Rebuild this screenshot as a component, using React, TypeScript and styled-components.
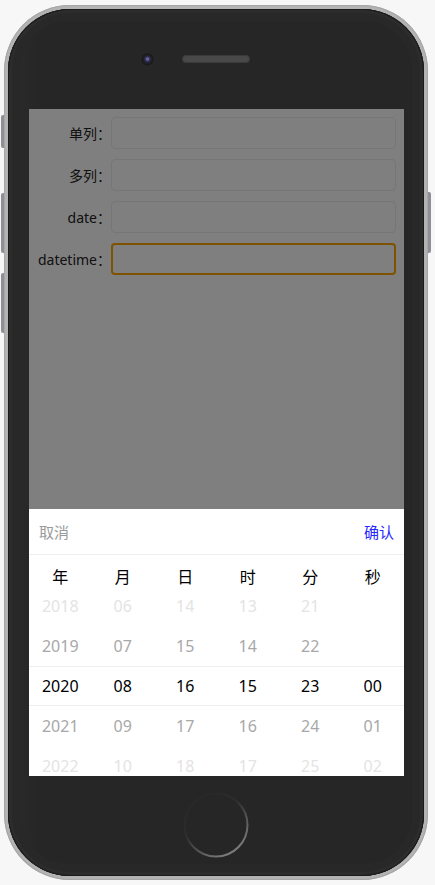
import React from "react";
import styled, { createGlobalStyle } from "styled-components";

const Global = createGlobalStyle`
  html, body { margin: 0; padding: 0; background: #f7f7f7; }
  body { font-family: "Noto Sans", "Noto Sans CJK SC", sans-serif; }
  #root { width: 435px; height: 885px; overflow: hidden; }
`;

const Phone = styled.div`
  position: relative;
  box-sizing: border-box;
  margin: 5px 0 0 4px;
  width: 424px;
  height: 875px;
  padding: 4px;
  border-radius: 66px;
  background: #b3b3b3;
  box-shadow: inset 0 0 0 1px #a6a6a6;
`;

const SideButton = styled.div<{ $side: "left" | "right"; $top: number; $h: number }>`
  position: absolute;
  top: ${(p) => p.$top}px;
  ${(p) => (p.$side === "left" ? "left: -3px;" : "right: -3px;")}
  width: 3px;
  height: ${(p) => p.$h}px;
  background: #8f8f96;
  border-radius: ${(p) => (p.$side === "left" ? "2px 0 0 2px" : "0 2px 2px 0")};
`;

const Body = styled.div`
  box-sizing: border-box;
  height: 100%;
  border-radius: 62px;
  background: linear-gradient(90deg, #2c2c2c 0, #262626 30px, #262626 100%);
  box-shadow: inset 0 0 0 1px #1b1b1b, inset 0 0 0 4px #2c2c2c, inset 0 0 0 12px #282828;
  display: flex;
  flex-direction: column;
`;

const TopBezel = styled.div`
  height: 100px;
  display: grid;
  grid-template-columns: 1fr auto 1fr;
  align-items: center;
`;

const Camera = styled.div`
  justify-self: end;
  margin-right: 31px;
  width: 9px;
  height: 9px;
  border-radius: 50%;
  background: radial-gradient(circle at 50% 45%, #6a6a9a 0 1px, #3a3560 2px, #1e1e2a 4px);
  box-shadow: 0 0 0 1.5px #1a1a1a;
`;

const Speaker = styled.div`
  width: 66px;
  height: 6px;
  border-radius: 3px;
  background-color: #555;
  background-image: radial-gradient(#3a3a3a 0.6px, transparent 0.8px);
  background-size: 2px 2px;
  box-shadow: 0 0 0 1px #3a3a3a;
`;

const Screen = styled.div`
  position: relative;
  align-self: flex-start;
  margin-left: 21px;
  width: 375px;
  height: 667px;
  overflow: hidden;
  background: #fff;
`;

const Form = styled.div`
  display: flex;
  flex-direction: column;
  gap: 10px;
  padding-top: 8px;
`;

const Row = styled.div`
  display: flex;
  align-items: center;
  padding-right: 8px;
`;

const Label = styled.div`
  width: 82px;
  text-align: right;
  font-size: 14px;
  color: #222;
  white-space: nowrap;
`;

const Input = styled.div<{ $focused?: boolean }>`
  flex: 1;
  box-sizing: border-box;
  height: 32px;
  border-radius: 4px;
  border: ${(p) => (p.$focused ? "2px solid #ffa500" : "1px solid #ececec")};
  background: #fff;
`;

const Overlay = styled.div`
  position: absolute;
  inset: 0;
  background: rgba(0, 0, 0, 0.5);
`;

const Picker = styled.div`
  position: absolute;
  left: 0;
  right: 0;
  bottom: 0;
  height: 267px;
  background: #fff;
  display: flex;
  flex-direction: column;
`;

const PickerHeader = styled.div`
  height: 45px;
  flex: none;
  display: flex;
  align-items: center;
  justify-content: space-between;
  padding: 0 10px;
  border-bottom: 1px solid #eeeeee;
  font-size: 15px;
`;

const HeaderButton = styled.span<{ $primary?: boolean }>`
  color: ${(p) => (p.$primary ? "#2626ff" : "#9a9a9a")};
`;

const Titles = styled.div`
  height: 35px;
  box-sizing: border-box;
  padding-top: 11px;
  flex: none;
  display: grid;
  grid-template-columns: repeat(6, 1fr);
  align-items: start;
  font-size: 16px;
  line-height: 22px;
  color: #000;
  text-align: center;
`;

const Wheels = styled.div`
  position: relative;
  flex: 1;
  overflow: hidden;
  display: grid;
  grid-template-columns: repeat(6, 1fr);
`;

const Column = styled.div`
  margin-top: -4px;
  display: flex;
  flex-direction: column;
`;

const Cell = styled.div<{ $tone: number }>`
  height: 40px;
  line-height: 40px;
  text-align: center;
  font-size: 16px;
  color: ${(p) => ["#000000", "#a8a8a8", "#e4e4e4"][p.$tone]};
`;

const SelectionBand = styled.div`
  position: absolute;
  left: 0;
  right: 0;
  top: 76px;
  height: 40px;
  box-sizing: border-box;
  border-top: 1px solid #eeeeee;
  border-bottom: 1px solid #eeeeee;
  pointer-events: none;
`;

const BottomBezel = styled.div`
  flex: 1;
  display: flex;
  align-items: center;
  justify-content: center;
  padding-bottom: 2px;
`;

const HomeButton = styled.svg`
  width: 66px;
  height: 66px;
  display: block;
`;

const fields = [
  { label: "单列：" },
  { label: "多列：" },
  { label: "date：" },
  { label: "datetime：", focused: true },
];

const titles = ["年", "月", "日", "时", "分", "秒"];

const columns: string[][] = [
  ["2018", "2019", "2020", "2021", "2022"],
  ["06", "07", "08", "09", "10"],
  ["14", "15", "16", "17", "18"],
  ["13", "14", "15", "16", "17"],
  ["21", "22", "23", "24", "25"],
  ["", "", "00", "01", "02"],
];

export default function App() {
  return (
    <>
      <Global />
      <Phone>
        <SideButton $side="left" $top={110} $h={33} />
        <SideButton $side="left" $top={188} $h={60} />
        <SideButton $side="left" $top={268} $h={60} />
        <SideButton $side="right" $top={187} $h={61} />
        <Body>
          <TopBezel>
            <Camera />
            <Speaker />
            <div />
          </TopBezel>
          <Screen>
            <Form>
              {fields.map((f) => (
                <Row key={f.label}>
                  <Label>{f.label}</Label>
                  <Input $focused={f.focused} />
                </Row>
              ))}
            </Form>
            <Overlay />
            <Picker>
              <PickerHeader>
                <HeaderButton>取消</HeaderButton>
                <HeaderButton $primary>确认</HeaderButton>
              </PickerHeader>
              <Titles>
                {titles.map((t) => (
                  <span key={t}>{t}</span>
                ))}
              </Titles>
              <Wheels>
                {columns.map((col, ci) => (
                  <Column key={ci}>
                    {col.map((v, i) => (
                      <Cell key={i} $tone={Math.abs(i - 2)}>
                        {v}
                      </Cell>
                    ))}
                  </Column>
                ))}
                <SelectionBand />
              </Wheels>
            </Picker>
          </Screen>
          <BottomBezel>
            <HomeButton viewBox="0 0 66 66">
              <defs>
                <linearGradient id="homeRing" x1="0.15" y1="0" x2="0.85" y2="1">
                  <stop offset="0" stopColor="#262626" />
                  <stop offset="0.4" stopColor="#2e2e2e" />
                  <stop offset="1" stopColor="#8a8a8a" />
                </linearGradient>
              </defs>
              <circle cx="33" cy="33" r="31.5" fill="none" stroke="url(#homeRing)" strokeWidth="2" />
            </HomeButton>
          </BottomBezel>
        </Body>
      </Phone>
    </>
  );
}
